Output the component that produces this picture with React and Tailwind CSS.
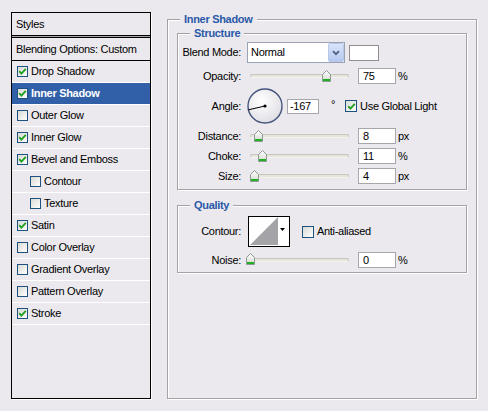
import React from "react";

const BG = "bg-[#ebe9ed]";

function Check({ checked, big }) {
  return (
    <span
      className={`${big ? "w-[12px] h-[12px]" : "w-[11px] h-[11px]"} shrink-0 border border-[#1c5180] bg-linear-to-br from-[#d9d9d4] to-white flex items-center justify-center`}
    >
      {checked && (
        <svg width="9" height="9" viewBox="0 0 9 9">
          <path d="M1.2 4.2 L3.4 6.6 L7.8 1.8" stroke="#21a121" strokeWidth="1.9" fill="none" />
        </svg>
      )}
    </span>
  );
}

function Thumb({ left, top = 2 }) {
  return (
    <svg
      width="9"
      height="12"
      viewBox="0 0 9 12"
      className="absolute"
      style={{ left: `${left}px`, top: `${top}px` }}
    >
      <defs>
        <linearGradient id="thumbg" x1="0" y1="0" x2="0" y2="1">
          <stop offset="0" stopColor="#ffffff" />
          <stop offset="1" stopColor="#d6d6ce" />
        </linearGradient>
      </defs>
      <path d="M4.5 0.5 L8.5 4.5 L8.5 11.5 L0.5 11.5 L0.5 4.5 Z" fill="url(#thumbg)" stroke="#8c9a96" />
      <rect x="1" y="9" width="7" height="2" fill="#22b022" />
    </svg>
  );
}

function Slider({ thumb, top }) {
  return (
    <div className="relative ml-[6px] w-[103px] h-full flex items-center pl-[3px]">
      <div className="w-[99px] h-[4px] rounded-[2px] bg-[#e6e5dc] border border-[#c8c7bd] border-b-[#f4f3ec]" />
      <Thumb left={thumb - 247} top={top} />
    </div>
  );
}

function Input({ value, w = "w-[38px]", pl = "pl-[4px]", h = "h-[16px]" }) {
  return (
    <div className={`${w} ${h} ${pl} border border-[#a7a6ab] bg-white flex items-center`}>{value}</div>
  );
}

function Label({ children }) {
  return <div className="w-[63px] shrink-0 text-right">{children}</div>;
}

function Title({ children }) {
  return (
    <div className={`-mt-[7px] ml-[12px] px-[4px] w-fit ${BG} leading-[13px] font-bold text-[#2a58a8]`}>
      {children}
    </div>
  );
}

const box = "border border-[#a3a2a7] shadow-[inset_1px_1px_0_#fff,1px_1px_0_#fff]";

const items = [
  { name: "Drop Shadow", checked: true },
  { name: "Inner Shadow", checked: true, selected: true },
  { name: "Outer Glow", checked: false },
  { name: "Inner Glow", checked: true },
  { name: "Bevel and Emboss", checked: true },
  { name: "Contour", checked: false, indent: true },
  { name: "Texture", checked: false, indent: true },
  { name: "Satin", checked: true },
  { name: "Color Overlay", checked: false },
  { name: "Gradient Overlay", checked: false },
  { name: "Pattern Overlay", checked: false },
  { name: "Stroke", checked: true },
];

export default function App() {
  return (
    <div
      className={`w-[488px] h-[411px] ${BG} flex items-start overflow-hidden text-[11px] leading-[13px] text-black tracking-[-0.3px] [font-family:'Liberation_Sans',Arial,sans-serif]`}
    >
      {/* Left styles list */}
      <div className="mt-[12px] ml-[11px] w-[140px] h-[387px] border border-black shadow-[1px_1px_0_#fff] flex flex-col">
        <div className="h-[22px] shrink-0 flex items-center pl-[4px]">Styles</div>
        <div className="h-[3px] shrink-0 border-y border-black bg-[#a5a4a9]" />
        <div className="h-[22px] shrink-0 flex items-center pl-[4px]">Blending Options: Custom</div>
        <div className="h-px shrink-0 bg-black" />
        {items.map((it) => (
          <div
            key={it.name}
            className={`h-[22px] shrink-0 flex items-center gap-[3px] border-b border-white ${
              it.indent ? "pl-[18px]" : "pl-[5px]"
            } ${it.selected ? "bg-[#3160a8] text-white font-bold" : ""}`}
          >
            <Check checked={it.checked} />
            <span>{it.name}</span>
          </div>
        ))}
      </div>

      {/* Right settings */}
      <div className={`ml-[16px] mt-[19px] w-[310px] h-[380px] flex flex-col ${box}`}>
        <Title>Inner Shadow</Title>

        {/* Structure */}
        <div className={`mt-[7px] mx-[9px] pb-[5px] flex flex-col ${box}`}>
          <Title>Structure</Title>

          <div className="mt-[2px] h-[21px] flex items-center">
            <Label>Blend Mode:</Label>
            <div className="ml-[6px] w-[98px] h-[21px] border border-[#9aa3b3] bg-white flex items-center">
              <span className="pl-[3px] flex-1">Normal</span>
              <div className="w-[16px] h-[19px] border border-[#b9c8e8] rounded-[2px] bg-linear-to-b from-[#dbe5fa] to-[#b6c9ef] flex items-center justify-center">
                <svg width="8" height="6" viewBox="0 0 8 6">
                  <path d="M1 1.2 L4 4.2 L7 1.2" stroke="#4d6185" strokeWidth="1.8" fill="none" />
                </svg>
              </div>
            </div>
            <div className="ml-[4px] w-[30px] h-[16px] border border-[#8f8f93] bg-white" />
          </div>

          <div className="mt-[5px] h-[16px] flex items-center">
            <Label>Opacity:</Label>
            <Slider thumb={322} />
            <div className="ml-[8px]">
              <Input value="75" />
            </div>
            <span className="ml-[2px]">%</span>
          </div>

          <div className="mt-[4px] h-[36px] flex items-center">
            <Label>Angle:</Label>
            <svg width="36" height="36" viewBox="0 0 36 36" className="ml-[6px] shrink-0">
              <defs>
                <radialGradient id="dial" cx="0.4" cy="0.35" r="0.7">
                  <stop offset="0" stopColor="#ffffff" />
                  <stop offset="1" stopColor="#dedde3" />
                </radialGradient>
              </defs>
              <circle cx="18" cy="18" r="17" fill="url(#dial)" stroke="#45537c" strokeWidth="1.4" />
              <line x1="18" y1="18" x2="1.5" y2="21.8" stroke="#000" strokeWidth="1" />
              <circle cx="18" cy="18" r="1.6" fill="#000" />
            </svg>
            <div className="ml-[4px]">
              <Input value="-167" w="w-[32px]" pl="pl-[2px]" h="h-[15px]" />
            </div>
            <span className="ml-[12px] self-start mt-[10px]">°</span>
            <div className="ml-[10px] flex items-center gap-[3px]">
              <Check checked big />
              <span>Use Global Light</span>
            </div>
          </div>

          <div className="mt-[4px] h-[16px] flex items-center">
            <Label>Distance:</Label>
            <Slider thumb={254} />
            <div className="ml-[8px]">
              <Input value="8" />
            </div>
            <span className="ml-[2px]">px</span>
          </div>

          <div className="mt-[4px] h-[16px] flex items-center">
            <Label>Choke:</Label>
            <Slider thumb={258} />
            <div className="ml-[8px]">
              <Input value="11" />
            </div>
            <span className="ml-[2px]">%</span>
          </div>

          <div className="mt-[4px] h-[16px] flex items-center">
            <Label>Size:</Label>
            <Slider thumb={250} />
            <div className="ml-[8px]">
              <Input value="4" />
            </div>
            <span className="ml-[2px]">px</span>
          </div>
        </div>

        {/* Quality */}
        <div className={`mt-[15px] mx-[9px] pb-[4px] flex flex-col ${box}`}>
          <Title>Quality</Title>

          <div className="mt-[4px] h-[31px] flex items-center">
            <Label>Contour:</Label>
            <div className="ml-[7px] w-[42px] h-[31px] border border-black bg-white shrink-0">
              <svg width="40" height="29" viewBox="0 0 40 29" className="block">
                <polygon points="1,28 29,0 29,28" fill="#a4a4a8" />
                <polygon points="31,11 36,11 33.5,14" fill="#000" />
              </svg>
            </div>
            <div className="ml-[12px] flex items-center gap-[3px]">
              <Check checked={false} big />
              <span>Anti-aliased</span>
            </div>
          </div>

          <div className="mt-[5px] h-[16px] flex items-center">
            <Label>Noise:</Label>
            <Slider thumb={246} top={1} />
            <div className="ml-[8px]">
              <Input value="0" />
            </div>
            <span className="ml-[2px]">%</span>
          </div>
        </div>
      </div>
    </div>
  );
}
